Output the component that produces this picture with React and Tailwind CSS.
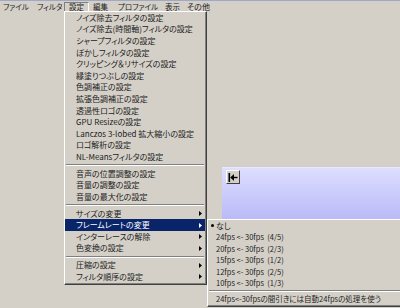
import React from "react";

const Arrow = ({ white }) => (
  <svg width="3" height="5" viewBox="0 0 3 5" className="shrink-0">
    <path d="M0 0L3 2.5L0 5Z" fill={white ? "#ffffff" : "#000000"} />
  </svg>
);

const mainItems = [
  { t: "ノイズ除去フィルタの設定" },
  { t: "ノイズ除去(時間軸)フィルタの設定" },
  { t: "シャープフィルタの設定" },
  { t: "ぼかしフィルタの設定" },
  { t: "クリッピング＆リサイズの設定" },
  { t: "縁塗りつぶしの設定" },
  { t: "色調補正の設定" },
  { t: "拡張色調補正の設定" },
  { t: "透過性ロゴの設定" },
  { t: "GPU Resizeの設定" },
  { t: "Lanczos 3-lobed 拡大縮小の設定" },
  { t: "ロゴ解析の設定" },
  { t: "NL-Meansフィルタの設定" },
  { sep: true },
  { t: "音声の位置調整の設定" },
  { t: "音量の調整の設定" },
  { t: "音量の最大化の設定" },
  { sep: true },
  { t: "サイズの変更", sub: true },
  { t: "フレームレートの変更", sub: true, hi: true },
  { t: "インターレースの解除", sub: true },
  { t: "色変換の設定", sub: true },
  { sep: true },
  { t: "圧縮の設定", sub: true },
  { t: "フィルタ順序の設定", sub: true },
];

const subItems = [
  { t: "なし", bullet: true },
  { t: "24fps <- 30fps  (4/5)" },
  { t: "20fps <- 30fps  (2/3)" },
  { t: "15fps <- 30fps  (1/2)" },
  { t: "12fps <- 30fps  (2/5)" },
  { t: "10fps <- 30fps  (1/3)" },
  { sep: true },
  { t: "24fps<-30fpsの間引きには自動24fpsの処理を使う" },
];

function Sep({ h }) {
  return (
    <div className={`flex flex-col justify-center px-[1px] ${h}`}>
      <div className="h-px bg-[#808080]" />
      <div className="h-px bg-white" />
    </div>
  );
}

export default function App() {
  return (
    <div className="relative w-[400px] h-[308px] overflow-hidden bg-[#d4d0c8] text-[#1c1c1c] font-['Noto_Sans_CJK_JP',sans-serif] [font-feature-settings:'palt'] leading-none">
      <div className="h-px bg-[#9ea9c8]" />
      {/* menu bar */}
      <div className="flex h-[11px] items-center text-[7.5px] whitespace-pre">
        <div className="w-[31px] pl-[3px]">ファイル</div>
        <div className="w-[33px] pl-[6px]">フィルタ</div>
        <div className="w-[25px] h-[10px] pl-[4px] flex items-center border border-t-[#808080] border-l-[#808080] border-r-white border-b-white">設定</div>
        <div className="w-[25px] pl-[4px]">編集</div>
        <div className="w-[47px] pl-[4px]">プロファイル</div>
        <div className="w-[22px] pl-[4px]">表示</div>
        <div className="pl-[4px] text-[8px]">その他</div>
      </div>

      {/* content area */}
      <div className="pl-[222px] pt-[155px]">
        <div className="h-[60px] bg-gradient-to-b from-[#dedeff] to-[#b4b4f6] border-t border-[#e8e8ff] pt-[2px] pl-[4px]">
          <div className="w-[14px] h-[14px] bg-[#d4d0c8] border border-t-white border-l-white border-r-[#404040] border-b-[#404040] flex items-center justify-center">
            <svg width="10" height="9" viewBox="0 0 10 9">
              <rect x="0.5" y="0" width="1.6" height="9" fill="#000" />
              <path d="M2.2 4.5L6 1V8Z" fill="#000" />
              <rect x="5.5" y="3.8" width="4" height="1.4" fill="#000" />
            </svg>
          </div>
        </div>
      </div>

      {/* main dropdown */}
      <div className="absolute left-[64px] top-[11px] w-[143px] border border-t-white border-l-white border-r-[#404040] border-b-[#404040] bg-[#d4d0c8]">
        <div className="border-r border-b border-[#808080] text-[8px] whitespace-pre">
          {mainItems.map((it, i) =>
            it.sep ? (
              <Sep key={i} h="h-[5.2px]" />
            ) : (
              <div
                key={i}
                className={`flex h-[11.6px] items-center pl-[11px] pr-[3px] ${it.hi ? "bg-[#0a246a] text-white" : ""}`}
              >
                <span className="flex-1">{it.t}</span>
                {it.sub && <Arrow white={it.hi} />}
              </div>
            )
          )}
        </div>
      </div>

      {/* submenu */}
      <div className="absolute left-[207px] top-[219px] w-[210px] border border-t-white border-l-white border-r-[#404040] border-b-[#404040] bg-[#d4d0c8]">
        <div className="border-b border-[#808080] text-[7.5px] whitespace-pre">
          {subItems.map((it, i) =>
            it.sep ? (
              <Sep key={i} h="h-[4.6px]" />
            ) : (
              <div key={i} className="flex h-[11.45px] items-center">
                <div className="w-[8px] flex justify-center pl-[1px]">
                  {it.bullet && <div className="w-[3px] h-[3px] rounded-full bg-black" />}
                </div>
                <span className={it.bullet ? "text-[8px]" : ""}>{it.t}</span>
              </div>
            )
          )}
        </div>
      </div>
    </div>
  );
}
